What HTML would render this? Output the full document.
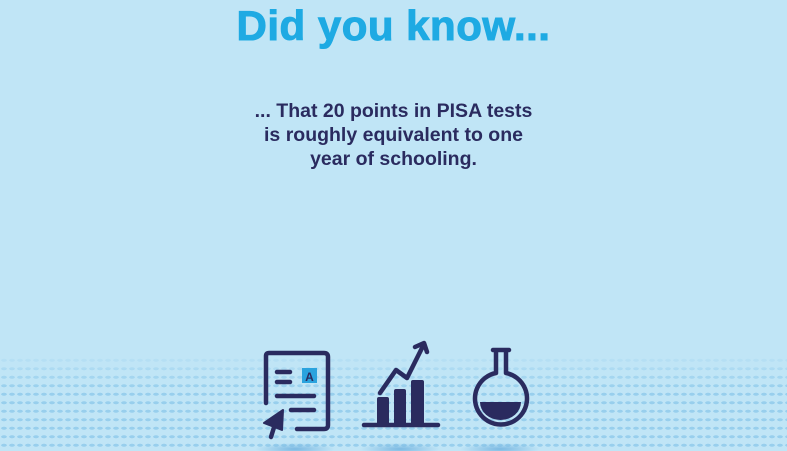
<!DOCTYPE html>
<html><head><style>
html,body{margin:0;padding:0}
body{width:787px;height:451px;background:#c0e5f6;position:relative;overflow:hidden;font-family:"Liberation Sans",sans-serif}
h1{position:absolute;left:0;width:787px;top:1px;margin:0;text-align:center;font-size:42px;line-height:50px;color:#1eaae3;font-weight:bold;letter-spacing:0.5px;-webkit-text-stroke:1px #1eaae3}
.p{position:absolute;left:0;width:787px;top:99px;text-align:center;font-size:19.5px;line-height:24px;color:#2a2b5f;font-weight:bold}
.dots{position:absolute;left:0;top:356px;width:787px;height:95px;
background-image:radial-gradient(ellipse 3px 1.6px at 50% 50%,#98cfed 90%,transparent 100%);
background-size:8px 8.5px;}
.fade{position:absolute;left:0;top:350px;width:787px;height:40px;background:linear-gradient(#c0e5f6,rgba(192,229,246,0))}
</style></head><body>
<h1>Did you know...</h1>
<div class="p">... That 20 points in PISA tests<br>is roughly equivalent to one<br>year of schooling.</div>
<div class="dots"></div>
<div class="fade"></div>
<svg style="position:absolute;left:0;top:0" width="787" height="451">
<defs><radialGradient id="sh"><stop offset="0" stop-color="#6aaedd" stop-opacity=".8"/><stop offset="1" stop-color="#6aaedd" stop-opacity="0"/></radialGradient></defs>
<ellipse cx="295" cy="449" rx="40" ry="6" fill="url(#sh)"/>
<ellipse cx="400" cy="449" rx="40" ry="6" fill="url(#sh)"/>
<ellipse cx="500" cy="449" rx="40" ry="6" fill="url(#sh)"/>
<g fill="none" stroke="#2a2b5f" stroke-width="4.5" stroke-linecap="round" stroke-linejoin="round">
<path d="M266 403 V356 Q266 353 269 353 H324 Q328 353 328 357 V425 Q328 429 324 429 H297"/>
<path d="M277 372 H290 M277 382 H290 M277 396 H314 M291 410 H314"/>
<path d="M275 424 L271 437"/>
<path d="M380 393 L396 370 L407 378 L423 346 M415 347 L424 343 L427 352"/>
<path d="M364 425 H438"/>
<path d="M493 350 H509 M496 350 V373 A26 26 0 1 0 506 373 V350"/>
</g>
<rect x="302" y="368" width="15" height="15" fill="#2aa3de"/>
<text x="309.5" y="381" font-family="Liberation Sans" font-weight="bold" font-size="12" fill="#2a2b5f" text-anchor="middle">A</text>
<path d="M283 410 L264 423 L282 430 Z" fill="#2a2b5f" stroke="#2a2b5f" stroke-width="2" stroke-linejoin="round"/>
<rect x="377" y="397" width="12" height="28" rx="2" fill="#2a2b5f"/>
<rect x="394" y="389" width="12" height="36" rx="2" fill="#2a2b5f"/>
<rect x="411" y="380" width="13" height="45" rx="2" fill="#2a2b5f"/>
<path d="M480 402 H521 A20.5 18 0 0 1 480 402 Z" fill="#2a2b5f"/>
</svg>
</body></html>
